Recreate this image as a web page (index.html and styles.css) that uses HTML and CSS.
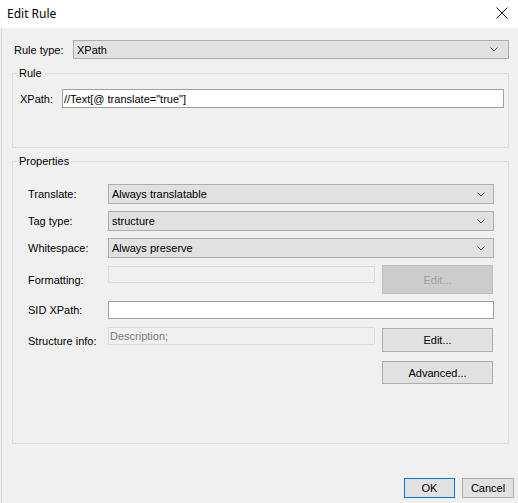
FILE: index.html
```html
<!DOCTYPE html>
<html lang="en">
<head>
    <meta charset="UTF-8">
    <title>Edit Rule</title>
    <link rel="stylesheet" href="styles.css">
</head>
<body>
<div class="titlebar">
    <span class="title">Edit Rule</span>
    <svg class="close" width="12" height="12" viewBox="0 0 12 12">
        <path d="M0.5 0.5 L11.5 11.5 M11.5 0.5 L0.5 11.5" stroke="#1a1a1a" stroke-width="1" fill="none"/>
    </svg>
</div>

<div class="main">
    <div class="type-row">
        <span class="type-label">Rule type:</span>
        <div class="combo type-combo">
            <span>XPath</span>
            <svg class="chevron" width="8" height="5" viewBox="0 0 8 5"><path d="M0.5 0.5 L4 4 L7.5 0.5" stroke="#555" fill="none"/></svg>
        </div>
    </div>

    <fieldset class="group">
        <legend>Rule</legend>
        <div class="rule-inner">
            <span class="xpath-label">XPath:</span>
            <input class="text xpath-input" type="text" value='//Text[@ translate="true"]'>
        </div>
    </fieldset>

    <fieldset class="group props">
        <legend>Properties</legend>
        <div class="props-inner">
            <div class="prop-row">
                <span class="prop-label">Translate:</span>
                <div class="combo prop-combo">
                    <span>Always translatable</span>
                    <svg class="chevron" width="8" height="5" viewBox="0 0 8 5"><path d="M0.5 0.5 L4 4 L7.5 0.5" stroke="#555" fill="none"/></svg>
                </div>
            </div>
            <div class="prop-row">
                <span class="prop-label">Tag type:</span>
                <div class="combo prop-combo">
                    <span>structure</span>
                    <svg class="chevron" width="8" height="5" viewBox="0 0 8 5"><path d="M0.5 0.5 L4 4 L7.5 0.5" stroke="#555" fill="none"/></svg>
                </div>
            </div>
            <div class="prop-row">
                <span class="prop-label">Whitespace:</span>
                <div class="combo prop-combo">
                    <span>Always preserve</span>
                    <svg class="chevron" width="8" height="5" viewBox="0 0 8 5"><path d="M0.5 0.5 L4 4 L7.5 0.5" stroke="#555" fill="none"/></svg>
                </div>
            </div>
            <div class="prop-row formatting-row">
                <span class="prop-label">Formatting:</span>
                <input class="text short-input" type="text" disabled>
                <button type="button" class="btn side-btn" disabled>Edit...</button>
            </div>
            <div class="prop-row sid-row">
                <span class="prop-label">SID XPath:</span>
                <input class="text sid-input" type="text">
            </div>
            <div class="prop-row structure-row">
                <span class="prop-label">Structure info:</span>
                <input class="text short-input" type="text" value="Description;" disabled>
                <button type="button" class="btn side-btn">Edit...</button>
            </div>
            <div class="prop-row advanced-row">
                <button type="button" class="btn side-btn">Advanced...</button>
            </div>
        </div>
    </fieldset>

    <div class="footer">
        <button type="button" class="btn ok-btn">OK</button>
        <button type="button" class="btn cancel-btn">Cancel</button>
    </div>
</div>
</body>
</html>
```

FILE: styles.css
```css
html, body {
    height: 100%;
}

body {
    margin: 0;
    background-color: #f0f0f0;
    font-family: "Liberation Sans", Arial, sans-serif;
    font-size: 11px;
    color: #000;
    display: flex;
    flex-direction: column;
}

/* Window title bar */
.titlebar {
    height: 28px;
    background-color: #fff;
    display: flex;
    align-items: center;
    justify-content: space-between;
    padding: 0 10px 0 7px;
    flex-shrink: 0;
}

.title {
    font-family: "Noto Sans", sans-serif;
    font-size: 12px;
    margin-top: -1px;
}

.close {
    margin-top: -3px;
}

.main {
    flex: 1;
    margin-left: 1px;
    border-left: 1px solid #d6d6d6;
    padding-left: 10px;
    display: flex;
    flex-direction: column;
}

/* Rule type */
.type-row {
    display: flex;
    align-items: center;
    margin: 12px 9px 0 0;
}

.type-label {
    width: 59px;
    padding-left: 2px;
}

.combo {
    height: 20px;
    box-sizing: border-box;
    background-color: #e1e1e1;
    border: 1px solid #adadad;
    display: flex;
    align-items: center;
    justify-content: space-between;
    padding: 0 8px 0 3px;
}

.type-combo {
    flex: 1;
    height: 19px;
    padding-right: 10px;
}

.chevron {
    display: block;
}

/* Group boxes */
.group {
    margin: 7px 9px 0 0;
    padding: 0;
    border: 1px solid #dcdcdc;
    min-width: 0;
}

.group legend {
    margin-left: 4px;
    padding: 0 2px;
    line-height: 14px;
}

.props {
    margin-top: 6px;
}

.rule-inner {
    display: flex;
    align-items: center;
    padding: 9px 0 39px 7px;
}

.xpath-label {
    width: 42px;
}

.text {
    box-sizing: border-box;
    margin: 0;
    padding: 0 1px;
    border: 1px solid #a0a0a0;
    background-color: #fff;
    font-family: "Liberation Sans", Arial, sans-serif;
    font-size: 11px;
    color: #000;
    outline: none;
}

.xpath-input {
    width: 442px;
    height: 19px;
}

.props-inner {
    display: flex;
    flex-direction: column;
    gap: 7px;
    padding: 16px 0 59px 15px;
}

.prop-row {
    display: flex;
    align-items: center;
}

.prop-label {
    width: 80px;
    flex-shrink: 0;
}

.prop-combo {
    width: 386px;
}

.short-input {
    width: 267px;
    height: 18px;
    align-self: flex-start;
}

.text:disabled {
    background-color: #f0f0f0;
    border-color: #dadada;
    color: #7a7a7a;
}

.formatting-row .short-input {
    margin-top: 1px;
    height: 17px;
}

.formatting-row .side-btn {
    height: 29px;
}

.sid-input {
    width: 386px;
    height: 18px;
}

.structure-row {
    margin-top: 1px;
    align-items: flex-start;
}

.structure-row .prop-label {
    margin-top: 8px;
}

.structure-row .side-btn {
    margin-top: 1px;
}

.advanced-row {
    margin-top: 2px;
    padding-left: 354px;
}

.advanced-row .side-btn {
    height: 23px;
}

/* Buttons */
.btn {
    box-sizing: border-box;
    margin: 0;
    padding: 0;
    background-color: #e1e1e1;
    border: 1px solid #adadad;
    font-family: "Liberation Sans", Arial, sans-serif;
    font-size: 11px;
    color: #000;
}

.btn:disabled {
    background-color: #cccccc;
    border-color: #bfbfbf;
    color: #a0a0a0;
}

.side-btn {
    width: 111px;
    height: 24px;
    margin-left: 7px;
}

.advanced-row .side-btn {
    margin-left: 0;
}

.footer {
    margin-top: auto;
    display: flex;
    justify-content: flex-end;
    gap: 7px;
    padding: 0 4px 5px 0;
}

.ok-btn {
    width: 51px;
    height: 20px;
    border-color: #0078d7;
}

.cancel-btn {
    width: 52px;
    height: 20px;
}
```
